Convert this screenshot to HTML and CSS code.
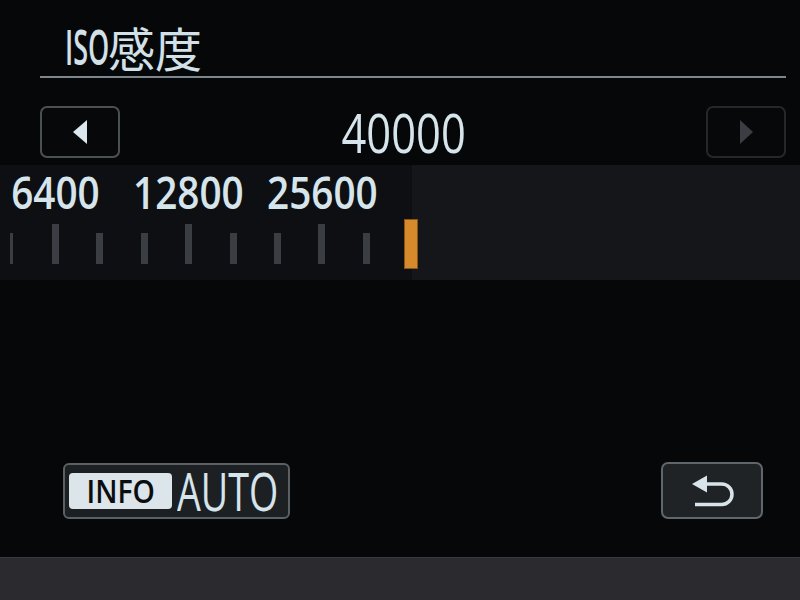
FILE: index.html
```html
<!DOCTYPE html>
<html lang="ja">
<head>
    <meta charset="UTF-8">
    <meta name="viewport" content="width=device-width, initial-scale=1.0">
    <title>ISO感度</title>
    <link rel="stylesheet" href="styles.css">
</head>
<body>
    <div class="screen">
        <div class="header">
            <h1 class="title"><span class="latin">ISO</span><span class="cjk">感度</span></h1>
            <div class="rule"></div>
        </div>

        <!-- 値の選択 -->
        <div class="value-row">
            <button class="arrow-btn">
                <svg width="14" height="24" viewBox="0 0 14 24"><polygon points="0,12 14,0 14,24" fill="#dce8ee"/></svg>
            </button>
            <div class="value"><span>40000</span></div>
            <button class="arrow-btn off">
                <svg width="13" height="24" viewBox="0 0 13 24"><polygon points="13,12 0,0 0,24" fill="#3a3e42"/></svg>
            </button>
        </div>

        <!-- 目盛り -->
        <div class="scale">
            <div class="track">
                <div class="labels">
                    <div class="label"><span>6400</span></div>
                    <div class="label"><span>12800</span></div>
                    <div class="label"><span>25600</span></div>
                </div>
                <div class="ticks">
                    <div class="slot"><div class="tick thin"></div></div>
                    <div class="slot"><div class="tick tall"></div></div>
                    <div class="slot"><div class="tick"></div></div>
                    <div class="slot"><div class="tick"></div></div>
                    <div class="slot"><div class="tick tall"></div></div>
                    <div class="slot"><div class="tick"></div></div>
                    <div class="slot"><div class="tick"></div></div>
                    <div class="slot"><div class="tick tall"></div></div>
                    <div class="slot"><div class="tick"></div></div>
                    <div class="slot"><div class="marker"></div></div>
                </div>
            </div>
        </div>

        <div class="footer">
            <button class="info-btn">
                <span class="info-badge"><span>INFO</span></span>
                <span class="auto"><span>AUTO</span></span>
            </button>
            <button class="back-btn">
                <svg width="44" height="34" viewBox="0 0 44 34">
                    <polygon points="2,10 17,1.5 17,18.5" fill="#d8e4ea"/>
                    <path d="M16 10 H31.75 A10.25 10.25 0 0 1 31.75 30.5 H5" fill="none" stroke="#d8e4ea" stroke-width="3.5"/>
                </svg>
            </button>
        </div>
    </div>
    <div class="bezel"></div>
</body>
</html>
```

FILE: styles.css
```css
body, html {
    margin: 0;
    padding: 0;
    background: #060709;
    font-family: 'Open Sans', 'Noto Sans CJK JP', sans-serif;
    color: #d6e4ec;
    overflow: hidden;
}

.screen {
    height: 557px;
    display: flex;
    flex-direction: column;
    background: #060709;
}

.header {
    padding: 18px 14px 0 40px;
}

.title {
    margin: 0;
    padding-left: 25px;
    height: 58px;
    font-size: 49px;
    font-weight: 400;
    line-height: 56px;
    white-space: nowrap;
    color: #d2e0e8;
}

.title .latin {
    display: inline-block;
    width: 43px;
    font-weight: 600;
    transform: scaleX(0.55);
    transform-origin: left;
}

.title .cjk {
    font-family: 'Noto Sans CJK JP', sans-serif;
    font-size: 47px;
    vertical-align: -2px;
}

.rule {
    height: 2px;
    background: #7d868c;
}

.value-row {
    display: flex;
    align-items: center;
    margin: 28px 14px 0 40px;
}

.arrow-btn {
    width: 80px;
    height: 52px;
    padding: 0;
    border: 2px solid #4a5155;
    border-radius: 7px;
    background: #07080a;
    display: flex;
    justify-content: center;
    align-items: center;
}

.arrow-btn.off {
    border-color: #25282b;
}

.value {
    flex: 1;
    text-align: center;
    padding-right: 18px;
    font-size: 55px;
    line-height: 52px;
    white-space: nowrap;
}

.value span {
    display: inline-block;
    transform: scaleX(0.79);
}

.scale {
    height: 115px;
    margin-top: 7px;
    background: linear-gradient(to right, #0e0f12 412px, #15161a 412px);
}

.track {
    margin-left: -11px;
    padding-top: 4px;
}

.labels {
    display: flex;
}

.label {
    width: 133.2px;
    flex-shrink: 0;
    text-align: center;
    font-size: 45px;
    font-weight: 600;
    line-height: 45px;
    white-space: nowrap;
}

.label span {
    display: inline-block;
    transform: scaleX(0.86);
}

.ticks {
    display: flex;
    align-items: flex-end;
    height: 50px;
    margin-top: 5px;
}

.slot {
    width: 44.4px;
    display: flex;
    justify-content: center;
    flex-shrink: 0;
}

.tick {
    width: 7px;
    height: 31px;
    margin-bottom: 5px;
    background: #3a3e42;
}

.tick.tall {
    height: 40px;
}

.tick.thin {
    width: 3px;
}

.marker {
    width: 12px;
    height: 48px;
    background: #d68a2c;
    border: 1px solid #8a5418;
}

.footer {
    margin-top: auto;
    display: flex;
    justify-content: space-between;
    align-items: flex-end;
    padding: 0 37px 38px 63px;
}

.info-btn {
    width: 227px;
    height: 56px;
    padding: 0 0 0 4px;
    border: 2px solid #5a6064;
    border-radius: 6px;
    background: #1d2023;
    display: flex;
    align-items: center;
    font-family: 'Open Sans', sans-serif;
}

.info-badge {
    width: 103px;
    height: 36px;
    flex-shrink: 0;
    border-radius: 4px;
    background: #dbe5ea;
    color: #0c0d0f;
    display: flex;
    justify-content: center;
    align-items: center;
    font-size: 33px;
    font-weight: 600;
    line-height: 36px;
}

.info-badge span {
    display: inline-block;
    transform: scaleX(0.86);
}

.auto {
    width: 105px;
    flex-shrink: 0;
    margin-left: 5px;
    font-size: 53px;
    line-height: 52px;
    color: #d6e4ec;
    white-space: nowrap;
}

.auto span {
    display: inline-block;
    transform: scaleX(0.71);
    transform-origin: left;
}

.back-btn {
    width: 102px;
    height: 57px;
    padding: 0;
    border: 2px solid #60676c;
    border-radius: 7px;
    background: #202326;
    display: flex;
    justify-content: center;
    align-items: center;
}

.bezel {
    height: 42px;
    border-top: 1px solid #3a3b40;
    background: #2b2b2f;
}
```
